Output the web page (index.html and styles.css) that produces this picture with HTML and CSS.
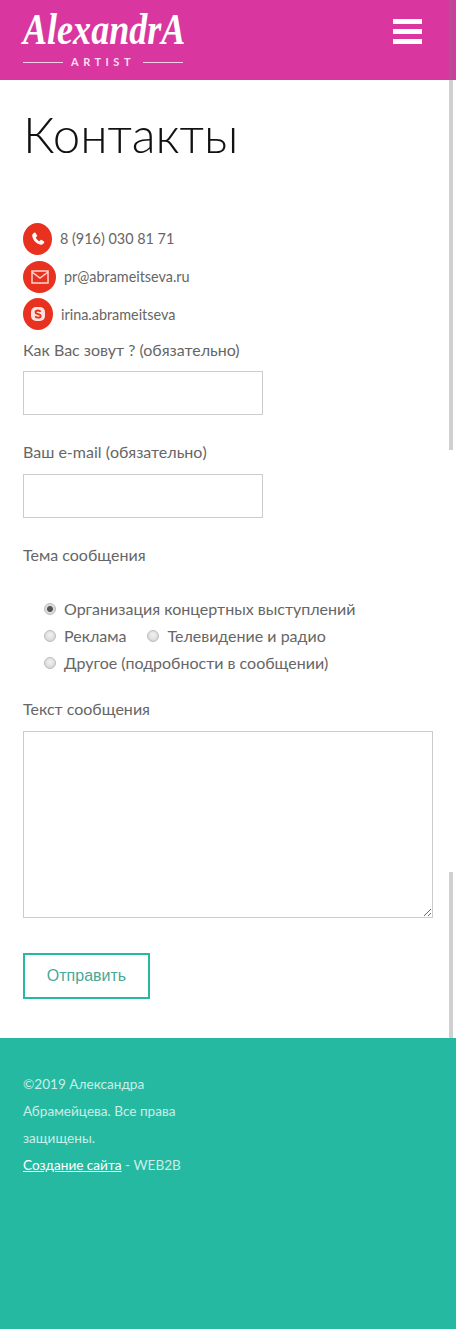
FILE: index.html
```html
<!DOCTYPE html>
<html lang="ru">
<head>
    <meta charset="UTF-8">
    <meta name="viewport" content="width=device-width, initial-scale=1.0">
    <title>Контакты</title>
    <link rel="stylesheet" href="styles.css">
</head>
<body>
    <header class="site-header">
        <div class="logo">
            <div class="logo-name">AlexandrA</div>
            <div class="logo-sub"><span class="logo-line"></span><span>ARTIST</span><span class="logo-line"></span></div>
        </div>
        <div class="burger"><span></span><span></span><span></span></div>
    </header>
    <div class="scroll-mark scroll-top"></div>
    <div class="scroll-mark scroll-bottom"></div>
    <main class="content">
        <h1>Контакты</h1>
        <div class="contact contact-phone">
            <span class="contact-icon icon-phone">
                <svg viewBox="0 0 24 24" width="16" height="16"><path fill="#fff" d="M6.600 2.600c.6-.4 1.300-.3 1.700.3l2.200 3.400c.4.600.3 1.200-.2 1.700L9 9.300c-.3.300-.3.700-.1 1.100.9 1.700 2.900 3.700 4.600 4.600.4.200.8.200 1.100-.1l1.300-1.300c.5-.5 1.100-.6 1.700-.2l3.400 2.200c.6.400.7 1.100.3 1.700-1.100 1.900-2.600 3.700-4.900 3.300C10 19.600 4.400 14 3.300 7.500 2.900 5.200 4.700 3.700 6.600 2.600z"/></svg>
            </span>
            <span class="contact-text">8 (916) 030 81 71</span>
        </div>
        <div class="contact contact-mail">
            <span class="contact-icon icon-mail">
                <svg viewBox="0 0 18 14" width="18" height="14"><path fill="none" stroke="#fbd5cf" stroke-width="1.500" d="M1 1h16v12H1zM1 2l8 6 8-6"/></svg>
            </span>
            <span class="contact-text">pr@abrameitseva.ru</span>
        </div>
        <div class="contact contact-skype">
            <span class="contact-icon icon-skype">
                <svg viewBox="0 0 16 16" width="16" height="16"><rect x="1" y="1" width="14" height="14" rx="5" fill="#fbe3df"/><path fill="none" stroke="#e8321f" stroke-width="1.800" d="M10.700 5.700C10 4.700 8.900 4.500 8 4.500c-1.300 0-2.500.6-2.500 1.700 0 2.400 5.200 1.300 5.200 3.700 0 1.100-1.300 1.700-2.600 1.700-1.100 0-2.200-.4-2.800-1.400"/></svg>
            </span>
            <span>irina.abrameitseva</span>
        </div>
        <form class="contact-form">
            <label class="field-label label-name">Как Вас зовут ? (обязательно)</label>
            <input class="text-input" type="text">
            <label class="field-label label-mail">Ваш e-mail (обязательно)</label>
            <input class="text-input" type="text">
            <div class="field-label label-topic">Тема сообщения</div>
            <div class="radios">
                <div class="radio-row">
                    <label><input type="radio" name="topic" checked>Организация концертных выступлений</label>
                </div>
                <div class="radio-row">
                    <label><input type="radio" name="topic">Реклама</label>
                    <label><input type="radio" name="topic">Телевидение и радио</label>
                </div>
                <div class="radio-row">
                    <label><input type="radio" name="topic">Другое (подробности в сообщении)</label>
                </div>
            </div>
            <label class="field-label label-text">Текст сообщения</label>
            <textarea class="text-area"></textarea>
            <button class="send" type="button">Отправить</button>
        </form>
    </main>
    <footer class="site-footer">
        <p>©2019 Александра Абрамейцева. Все права защищены.</p>
        <p><a href="#">Создание сайта</a> - WEB2B</p>
    </footer>
</body>
</html>
```

FILE: styles.css
```css
body {
    font-family: Lato, "Noto Sans", sans-serif;
    margin: 0;
    padding: 0;
    background-color: #fff;
    color: #666;
    position: relative;
}
.site-header {
    background: #d936a0;
    height: 80px;
    display: flex;
    justify-content: space-between;
    padding: 0 34px 0 23px;
}
.logo {
    width: 160px;
    color: #fff;
}
.logo-name {
    font-family: "Liberation Serif", serif;
    font-style: italic;
    font-weight: bold;
    font-size: 44px;
    line-height: 48px;
    height: 50px;
    padding-top: 6px;
    white-space: nowrap;
    transform: scaleX(0.82);
    transform-origin: left center;
}
.logo-sub {
    display: flex;
    align-items: center;
    justify-content: space-between;
    font-size: 11px;
    line-height: 12px;
    font-weight: bold;
    letter-spacing: 4.500px;
    color: #f9dff0;
}
.logo-line {
    width: 40px;
    height: 1px;
    background: #f6cfe8;
}
.burger {
    width: 29px;
    padding-top: 19px;
}
.burger span {
    display: block;
    height: 5px;
    background: #fff;
    margin-bottom: 5px;
}
.scroll-mark {
    position: absolute;
    left: 449px;
    width: 4px;
    background: rgba(120, 120, 120, 0.35);
}
.scroll-top {
    top: 0;
    height: 450px;
}
.scroll-bottom {
    top: 872px;
    height: 166px;
}
.content {
    padding: 0 23px;
    height: 958px;
}
h1 {
    margin: 0;
    padding-top: 23px;
    height: 120px;
    box-sizing: border-box;
    font-size: 49.300px;
    line-height: 62px;
    font-weight: 300;
    color: #111;
}
.contact {
    display: flex;
    align-items: center;
    font-size: 14.400px;
    height: 32px;
    gap: 8px;
}
.contact-text {
    padding-bottom: 2px;
}
.contact-phone {
    margin-top: 23px;
}
.contact-mail {
    margin-top: 6px;
}
.contact-skype {
    margin-top: 5px;
}
.contact-icon {
    display: flex;
    align-items: center;
    justify-content: center;
    background: #e8321f;
    border-radius: 50%;
    height: 32px;
}
.icon-phone {
    width: 29px;
}
.icon-mail {
    width: 33px;
}
.icon-skype {
    width: 30px;
}
.field-label {
    display: block;
    font-size: 16px;
    line-height: 20px;
}
.label-name {
    margin-top: 10px;
}
.text-input {
    display: block;
    width: 240px;
    height: 44px;
    box-sizing: border-box;
    margin-top: 11px;
    border: 1px solid #ccc;
    background: #fff;
}
.label-mail {
    margin-top: 27px;
}
.label-mail + .text-input {
    margin-top: 12px;
}
.label-topic {
    margin-top: 27px;
}
.radios {
    margin-top: 30px;
    padding-left: 21px;
}
.radio-row {
    display: flex;
    gap: 21px;
    height: 27px;
    align-items: center;
    font-size: 16px;
}
.radio-row input {
    appearance: none;
    box-sizing: border-box;
    display: inline-block;
    margin: 0 8px 0 0;
    width: 12px;
    height: 12px;
    vertical-align: 0;
    border: 1px solid #bbb;
    border-radius: 50%;
    background: radial-gradient(circle at 50% 40%, #f2f2f2, #cfcfcf);
}
.radio-row input:checked {
    background: radial-gradient(circle, #555 0, #555 2.500px, #dcdcdc 3.500px);
}
.label-text {
    margin-top: 23px;
}
.text-area {
    display: block;
    width: 410px;
    height: 187px;
    box-sizing: border-box;
    margin-top: 12px;
    border: 1px solid #ccc;
}
.send {
    display: block;
    margin-top: 35px;
    width: 127px;
    height: 46px;
    background: #fff;
    border: 2px solid #26b9a1;
    color: #4aa898;
    font-family: "Liberation Sans", Arial, sans-serif;
    font-size: 16px;
}
.site-footer {
    background: #26b9a1;
    height: 291px;
    box-sizing: border-box;
    padding: 33px 23px 0;
    color: #c9eee7;
    font-size: 13.600px;
    line-height: 27px;
}
.site-footer p {
    margin: 0;
    width: 175px;
}
.site-footer a {
    color: #fff;
}
```
